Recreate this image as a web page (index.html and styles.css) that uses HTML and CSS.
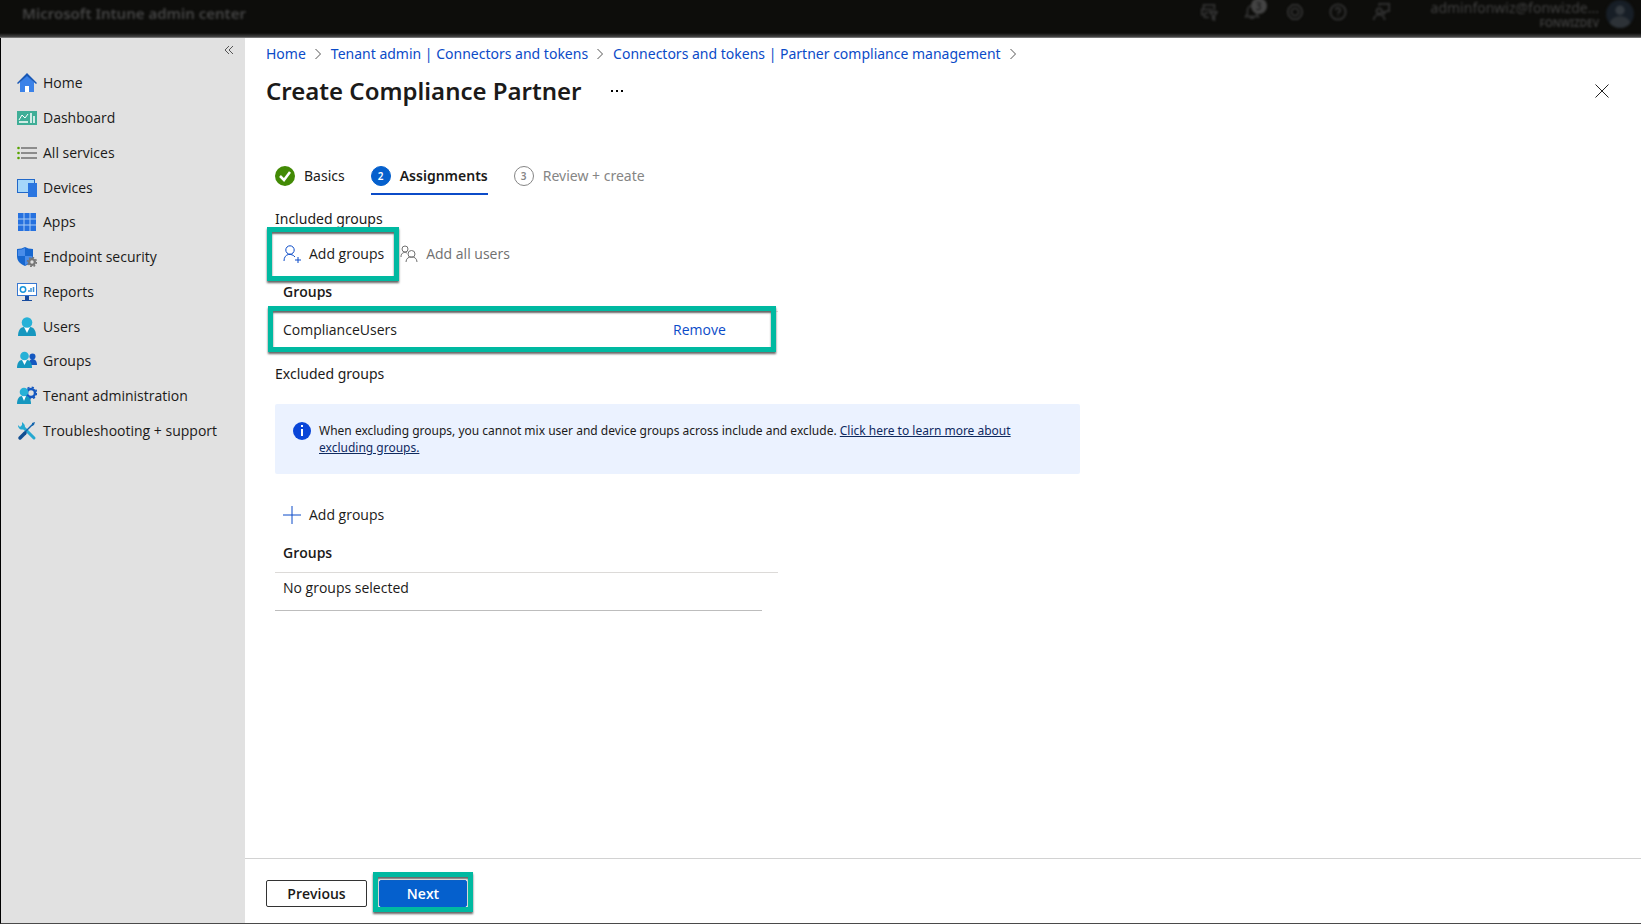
FILE: index.html
```html
<!DOCTYPE html>
<html lang="en">
<head>
    <meta charset="UTF-8">
    <meta name="viewport" content="width=device-width, initial-scale=1.0">
    <title>Create Compliance Partner - Microsoft Intune admin center</title>
    <link rel="stylesheet" href="styles.css">
</head>
<body>
    <header class="topbar">
        <span class="product">Microsoft Intune admin center</span>
        <div class="topbar-right">
            <div class="topbar-icons">
                <button type="button" aria-label="Directories">
                    <svg viewBox="0 0 20 20"><path d="M16 8V2H4v5H2v6h3v3h5M5 7h9M5 11h4M11 10h8l-3 4v5l-2-1v-4z"/></svg>
                </button>
                <button type="button" aria-label="Notifications">
                    <svg viewBox="0 0 20 20"><path d="M3 15h14l-2-3V8a5 5 0 0 0-10 0v4zM8 15a2 2 0 0 0 4 0"/></svg>
                    <span class="badge">3</span>
                </button>
                <button type="button" aria-label="Settings">
                    <svg viewBox="0 0 20 20"><path d="M7 2h6l4 4 1 4-1 4-4 4H7l-4-4-1-4 1-4z"/><circle cx="10" cy="10" r="4"/></svg>
                </button>
                <button type="button" aria-label="Help">
                    <svg viewBox="0 0 20 20"><circle cx="10" cy="10" r="8.500"/><path d="M7.500 8a2.500 2.500 0 1 1 3.500 2.200q-1 .5-1 2M10 14v1"/></svg>
                </button>
                <button type="button" aria-label="Feedback">
                    <svg viewBox="0 0 20 20"><circle cx="8" cy="9" r="3"/><path d="M2 19c0-8 12-8 12 0M8 3V1h11v8h-3l-3 3V9"/></svg>
                </button>
            </div>
            <div class="account">
                <span class="account-mail">adminfonwiz@fonwizde...</span>
                <span class="account-org">FONWIZDEV</span>
            </div>
            <svg class="avatar" viewBox="0 0 30 30"><circle cx="15" cy="15" r="15" fill="#171e26"/><circle cx="15" cy="11" r="5" fill="#33393f"/><path d="M4 25c2-10 20-10 22 0a15 15 0 0 1-22 0z" fill="#2d3237"/></svg>
        </div>
    </header>

    <div class="shell">
        <nav class="sidebar">
            <button type="button" class="collapse" aria-label="Collapse menu">
                <svg viewBox="0 0 10 10"><path d="M5 1L1 5l4 4M9 1L5 5l4 4"/></svg>
            </button>
            <ul>
                <li><a href="#">
                    <svg viewBox="0 0 20 20"><path d="M3 9l7-7 7 7v10h-5v-6H8v6H3z" fill="#3b82e8"/><path d="M0 10L10 0l10 10-1 1-9-8-9 8z" fill="#1757b5"/><path d="M8 13h4v6H8z" fill="#fff"/></svg>
                    Home</a></li>
                <li><a href="#">
                    <svg viewBox="0 0 20 20"><rect y="3" width="20" height="14" fill="#3fae97"/><path d="M2 12l3-5 3 3 3-4" fill="none" stroke="#fff"/><path d="M2 14h9M14 5v10M17 8v7" fill="none" stroke="#fff" stroke-width="1.500"/></svg>
                    Dashboard</a></li>
                <li><a href="#">
                    <svg viewBox="0 0 20 20"><path d="M4 5h16M4 10h16M4 15h16" stroke="#707070" stroke-width="1.300"/><g fill="#57a300"><circle cx="1.500" cy="5" r="1.300"/><circle cx="1.500" cy="10" r="1.300"/><circle cx="1.500" cy="15" r="1.300"/></g></svg>
                    All services</a></li>
                <li><a href="#">
                    <svg viewBox="0 0 20 20"><path d="M0 1h18v14H0z" fill="#2168c9"/><path d="M1 2h16v12H1z" fill="#a5d7fa"/><path d="M11 5h9v14h-9z" fill="#2b76e0"/></svg>
                    Devices</a></li>
                <li><a href="#">
                    <svg viewBox="0 0 20 20"><path d="M1 1h18v18H1z" fill="#2671df"/><path d="M7 1v18M13 1v18M1 7h18M1 13h18" stroke="#a8ccf5"/></svg>
                    Apps</a></li>
                <li><a href="#">
                    <svg viewBox="0 0 20 20"><path d="M0 2q5 0 8-2 3 2 8 2v7c0 6-4 8-8 10-4-2-8-4-8-10z" fill="#1767cf"/><path d="M1 3q4 0 7-2v8H1zM8 9h7c0 5-4 8-7 9z" fill="#498ce9"/><circle cx="15" cy="15" r="3.500" fill="#777" stroke="#777"/><circle cx="15" cy="15" r="4.500" fill="none" stroke="#777" stroke-width="1.500" stroke-dasharray="1.800 1.700"/><circle cx="15" cy="15" r="1.700" fill="#e1e1e1"/></svg>
                    Endpoint security</a></li>
                <li><a href="#">
                    <svg viewBox="0 0 20 20"><path d="M0 1h20v13H0z" fill="#3878d1"/><path d="M1 2h18v11H1z" fill="#fff"/><circle cx="6" cy="7.500" r="2.700" fill="none" stroke="#1695db" stroke-width="1.500"/><path d="M12 10V8M14 10V6M16.500 10V5" stroke="#398fd6" stroke-width="1.500"/><path d="M8 14h4v4h3v1H5v-1h3z" fill="#174a9d"/></svg>
                    Reports</a></li>
                <li><a href="#">
                    <svg viewBox="0 0 20 20"><path d="M1 19c0-5 2-9 6-9h6c4 0 6 4 6 9z" fill="#1697bf"/><path d="M7 10h6l-3 6z" fill="#fff"/><circle cx="10" cy="5.500" r="5.300" fill="#27b1d7"/></svg>
                    Users</a></li>
                <li><a href="#">
                    <svg viewBox="0 0 20 20"><path d="M12 14c0-4 1-6 3-6 3 0 5 2 5 6z" fill="#1558c0"/><circle cx="15.500" cy="5.500" r="3" fill="#1558c0"/><path d="M0 17c0-5 2-8 5-8h5c3 0 5 3 5 8z" fill="#1697bf"/><path d="M5 9h5l-2.500 5z" fill="#fff"/><circle cx="7.500" cy="5" r="4.300" fill="#27b1d7"/></svg>
                    Groups</a></li>
                <li><a href="#">
                    <svg viewBox="0 0 20 20"><circle cx="14" cy="7" r="4" fill="none" stroke="#1558c0" stroke-width="2.500"/><circle cx="14" cy="7" r="5.700" fill="none" stroke="#1558c0" stroke-width="1.600" stroke-dasharray="2.200 2.280"/><path d="M0 18c0-5 2-8 5-8h4c3 0 5 3 5 8z" fill="#1697bf"/><path d="M5 10h4l-2 5z" fill="#fff"/><circle cx="7" cy="6" r="4.300" fill="#27b1d7"/></svg>
                    Tenant administration</a></li>
                <li><a href="#">
                    <svg viewBox="0 0 20 20"><path d="M6 6l11 11" stroke="#25a9d1" stroke-width="3" stroke-linecap="round"/><path d="M5 1v3L3 6 1 4a4 4 0 0 0 6 4 4 4 0 0 0-1-6z" fill="#25a9d1"/><path d="M7 12L16 3" stroke="#1465ad" stroke-width="1.500"/><path d="M15 2l3-1-1 3-2 1z" fill="#1465ad"/><path d="M3 17l5-5" stroke="#124f92" stroke-width="3.500" stroke-linecap="round"/></svg>
                    Troubleshooting + support</a></li>
            </ul>
        </nav>

        <div class="blade">
            <main class="content">
                <nav class="breadcrumb" aria-label="Breadcrumb">
                    <a href="#">Home</a>
                    <svg viewBox="0 0 8 12"><path d="M1 1l5 5-5 5"/></svg>
                    <a href="#">Tenant admin | Connectors and tokens</a>
                    <svg viewBox="0 0 8 12"><path d="M1 1l5 5-5 5"/></svg>
                    <a href="#">Connectors and tokens | Partner compliance management</a>
                    <svg viewBox="0 0 8 12"><path d="M1 1l5 5-5 5"/></svg>
                </nav>
                <div class="title-row">
                    <h1>Create Compliance Partner</h1>
                    <button type="button" class="more" aria-label="More actions">
                        <svg viewBox="0 0 14 4"><path d="M1 1h2v2H1zM6 1h2v2H6zM11 1h2v2h-2z"/></svg>
                    </button>
                    <button type="button" class="close" aria-label="Close">
                        <svg viewBox="0 0 14 14"><path d="M.5.5l13 13M13.500.5l-13 13"/></svg>
                    </button>
                </div>

                <div class="wizard">
                    <div class="steps">
                        <a href="#" class="step">
                            <svg class="step-done" viewBox="0 0 20 20"><circle cx="10" cy="10" r="10" fill="#428a05"/><path d="M5 10l4 4 6-8" fill="none" stroke="#fff" stroke-width="2.500"/></svg>
                            Basics</a>
                        <a href="#" class="step active"><span class="num">2</span>Assignments</a>
                        <a href="#" class="step pending"><span class="num">3</span>Review + create</a>
                    </div>

                    <h2 class="section-label">Included groups</h2>
                    <div class="commands">
                        <button type="button" class="command highlight highlight-command">
                            <svg viewBox="0 0 18 18"><circle cx="7" cy="5" r="4.200"/><path d="M1 16c0-8 8-8 11-4M15 12v6M12 15h6"/></svg>
                            Add groups
                        </button>
                        <button type="button" class="command" disabled>
                            <svg viewBox="0 0 18 18"><circle cx="5" cy="4" r="3"/><path d="M1 12c0-5 4-5 6-4M6 17c0-7 11-7 11 0"/><circle cx="11.500" cy="9" r="3.500"/></svg>
                            Add all users
                        </button>
                    </div>
                    <table class="group-table">
                        <thead>
                            <tr><th>Groups</th><th class="col-action"></th><th class="col-gutter"></th></tr>
                        </thead>
                        <tbody class="highlight highlight-row">
                            <tr><td>ComplianceUsers</td><td><a href="#">Remove</a></td><td class="col-gutter"></td></tr>
                        </tbody>
                    </table>

                    <h2 class="section-label section-excluded">Excluded groups</h2>
                    <div class="info">
                        <svg viewBox="0 0 18 18"><circle cx="9" cy="9" r="9" fill="#0a46d8"/><path d="M9 7v7M9 3v2" stroke="#fff" stroke-width="2"/></svg>
                        <p>When excluding groups, you cannot mix user and device groups across include and exclude. <a href="#">Click here to learn more about excluding groups.</a></p>
                    </div>
                    <div class="commands">
                        <button type="button" class="command">
                            <svg viewBox="0 0 18 18"><path d="M9 0v18M0 9h18"/></svg>
                            Add groups
                        </button>
                    </div>
                    <table class="group-table empty">
                        <thead>
                            <tr><th>Groups</th><th class="col-action"></th><th class="col-gutter"></th></tr>
                        </thead>
                        <tbody>
                            <tr><td colspan="2">No groups selected</td><td class="col-gutter"></td></tr>
                        </tbody>
                    </table>
                </div>
            </main>
            <footer class="actions">
                <button type="button" class="btn">Previous</button>
                <button type="button" class="btn btn-primary highlight highlight-button">Next</button>
            </footer>
        </div>
    </div>
</body>
</html>
```
FILE: styles.css
```css
* {
    box-sizing: border-box;
}
body {
    margin: 0;
    min-height: 100vh;
    display: flex;
    flex-direction: column;
    font-family: 'Open Sans', sans-serif;
    font-size: 14px;
    line-height: 20px;
    color: #1b1a19;
    background-color: #fff;
}
a {
    color: #0b4bc8;
    text-decoration: none;
}
button {
    font: inherit;
    color: inherit;
    background: none;
    border: none;
    padding: 0;
    cursor: pointer;
}
svg {
    display: block;
    flex-shrink: 0;
}
ul, h1, h2, p {
    margin: 0;
    padding: 0;
}

/* Top bar */
.topbar {
    height: 38px;
    display: flex;
    justify-content: space-between;
    padding: 0 6px 0 22px;
    font-family: 'Noto Sans', sans-serif;
    background: linear-gradient(#0d0d0b 33px, #474747 37px, #a0a0a0 38px);
}
.topbar > * {
    filter: blur(1px);
}
.product {
    font-size: 15px;
    font-weight: 600;
    line-height: 26px;
    color: #454545;
}
.topbar-right {
    display: flex;
}
.topbar-icons {
    display: flex;
    gap: 25px;
    padding-top: 3px;
    margin-right: 41px;
}
.topbar-icons button {
    position: relative;
    width: 18px;
    height: 18px;
}
.topbar-icons svg {
    width: 18px;
    height: 18px;
    fill: none;
    stroke: #333;
    stroke-width: 2;
}
.badge {
    position: absolute;
    top: -5px;
    right: -6px;
    width: 16px;
    height: 16px;
    border-radius: 50%;
    background-color: #444;
    color: #111;
    font-size: 10px;
    line-height: 16px;
}
.account {
    display: flex;
    flex-direction: column;
    text-align: right;
    color: #404040;
    margin-right: 6px;
}
.account-mail {
    line-height: 16px;
}
.account-org {
    font-size: 10px;
    font-weight: 600;
    line-height: 14px;
}
.avatar {
    width: 30px;
    height: 28px;
}

/* Page shell */
.shell {
    flex: 1;
    display: flex;
    border-left: 1px solid #000;
    border-bottom: 1px solid #4a4a4a;
}
.sidebar {
    width: 244px;
    flex-shrink: 0;
    background-color: #e1e1e1;
}
.collapse {
    display: block;
    margin: 7px 11px 11px auto;
}
.collapse svg {
    width: 10px;
    height: 10px;
    fill: none;
    stroke: #555;
}
.sidebar ul {
    display: flex;
    flex-direction: column;
    height: 382px;
    list-style: none;
}
.sidebar li {
    flex: 1;
}
.sidebar a {
    display: flex;
    align-items: center;
    gap: 6px;
    height: 100%;
    padding-left: 16px;
    color: #1b1a19;
}
.sidebar li svg {
    width: 20px;
    height: 20px;
}
.blade {
    flex: 1;
    min-width: 0;
    display: flex;
    flex-direction: column;
}
.content {
    flex: 1;
    padding: 6px 32px 20px 21px;
}

/* Heading */
.breadcrumb {
    display: flex;
    align-items: center;
    gap: 8px;
    font-family: 'Noto Sans', sans-serif;
}
.breadcrumb svg {
    width: 9px;
    height: 12px;
    fill: none;
    stroke: #555;
}
.title-row {
    display: flex;
    align-items: center;
    margin-top: 11px;
}
h1 {
    font-family: 'Noto Sans', sans-serif;
    font-size: 24px;
    font-weight: 600;
    line-height: 32px;
}
.more {
    margin-left: 28px;
}
.more svg {
    width: 14px;
    height: 4px;
}
.close {
    margin-left: auto;
}
.close svg {
    width: 14px;
    height: 14px;
    fill: none;
    stroke: #222;
}

/* Wizard */
.wizard {
    padding-left: 9px;
}
.steps {
    display: flex;
    gap: 26px;
    margin-top: 59px;
    font-family: 'Noto Sans', sans-serif;
}
.step {
    display: flex;
    gap: 9px;
    padding-bottom: 7px;
    border-bottom: 2px solid transparent;
    color: #1b1a19;
}
.step.active {
    font-weight: 600;
    border-bottom-color: #0b4bc8;
}
.step.pending {
    color: #858585;
}
.step-done {
    width: 20px;
    height: 20px;
}
.num {
    width: 20px;
    height: 20px;
    border-radius: 50%;
    border: 1px solid #858585;
    font-size: 10px;
    font-weight: 600;
    line-height: 18px;
    text-align: center;
}
.active .num {
    background-color: #0560cd;
    border-color: #0560cd;
    color: #fff;
}
.section-label {
    margin-top: 14px;
    font-family: 'Noto Sans', sans-serif;
    font-size: 14px;
    font-weight: 400;
}
.section-excluded {
    margin-top: 16px;
}
.commands {
    display: flex;
    gap: 16px;
    margin-top: 7px;
    padding-left: 8px;
}
.command {
    display: flex;
    align-items: center;
    gap: 8px;
    height: 36px;
}
.command svg {
    width: 18px;
    height: 18px;
    fill: none;
    stroke: #0b4bc8;
}
.command:disabled {
    color: #707070;
    cursor: default;
}
.command:disabled svg {
    stroke: #707070;
}
.group-table {
    width: 100%;
    max-width: 503px;
    table-layout: fixed;
    border-collapse: separate;
    border-spacing: 0;
}
.group-table th {
    height: 40px;
    padding: 0 8px;
    border-bottom: 1px solid #dcdad8;
    font-weight: 600;
    text-align: left;
}
.group-table td {
    height: 36px;
    padding: 0 8px;
    border-bottom: 1px solid #e6e6e6;
}
.group-table .col-action {
    width: 97px;
}
.group-table .col-gutter {
    width: 16px;
    padding: 0;
}
.group-table td.col-gutter {
    border-bottom: none;
}
.group-table.empty td {
    height: 38px;
    padding-top: 5px;
    border-bottom-color: #bdbdbd;
    vertical-align: top;
}
.info {
    display: flex;
    gap: 8px;
    max-width: 805px;
    margin: 20px 0 23px;
    padding: 18px 44px 18px 18px;
    border-radius: 2px;
    background-color: #ebf2ff;
    font-family: 'Noto Sans', sans-serif;
    font-size: 12px;
    line-height: 17px;
}
.info svg {
    width: 18px;
    height: 18px;
}
.info a {
    color: #0f2a5f;
    text-decoration: underline;
}

/* Green call-out frames */
.highlight {
    position: relative;
}
.highlight::after {
    content: "";
    position: absolute;
    border: 5px solid #00b9a1;
    box-shadow: 0 2px 2px #666, inset 0 2px 2px #666;
    pointer-events: none;
}
.highlight-command::after {
    inset: -9px -15px -9px -16px;
}
.highlight-row::after {
    inset: -6px 2px -4px -7px;
}
.highlight-button::after {
    inset: -9px -7px -6px;
}

/* Footer */
.actions {
    display: flex;
    gap: 12px;
    padding: 21px 21px 16px;
    border-top: 1px solid #d2d2d2;
}
.btn {
    width: 101px;
    height: 27px;
    border: 1px solid #333;
    border-radius: 2px;
    font-weight: 600;
}
.btn-primary {
    width: 88px;
    border-color: #0560cd;
    background-color: #0560cd;
    color: #fff;
}
```
